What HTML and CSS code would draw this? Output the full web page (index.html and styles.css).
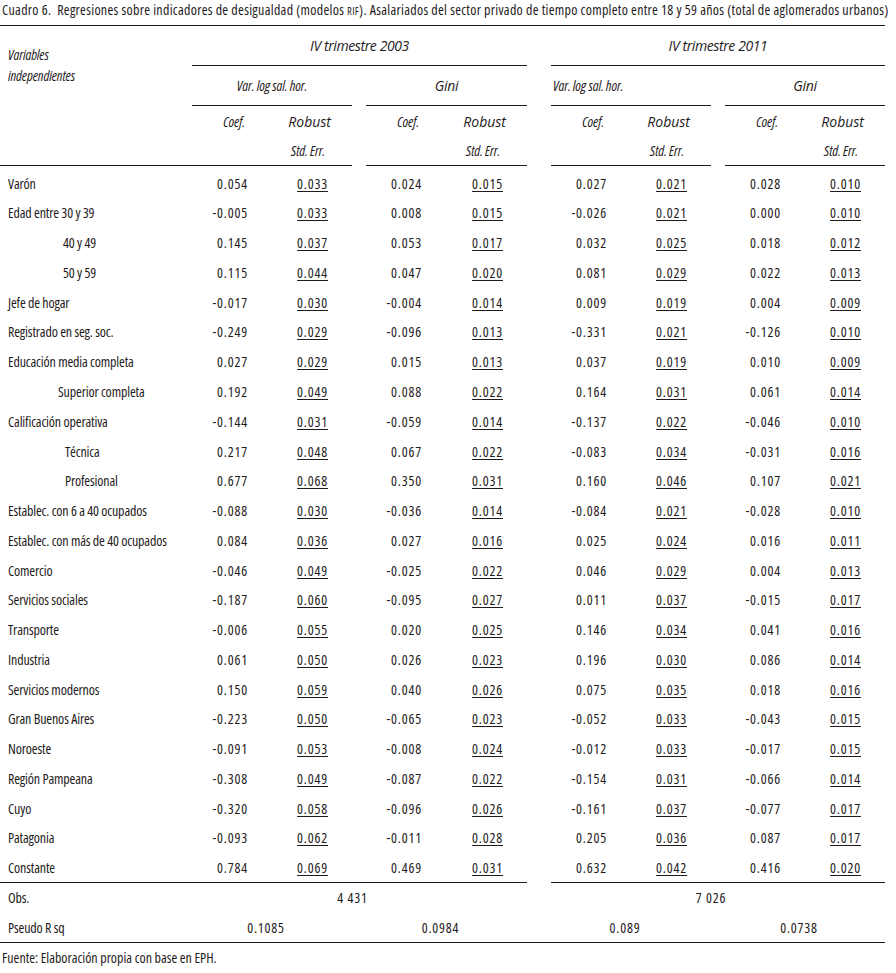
FILE: index.html
```html
<!DOCTYPE html>
<html lang="es">
<head>
<meta charset="utf-8">
<title>Cuadro 6</title>
<link rel="stylesheet" href="styles.css">
</head>
<body>
<div class="title">Cuadro 6.&nbsp; Regresiones sobre indicadores de desigualdad (modelos <span class="sc">RIF</span>). Asalariados del sector privado de tiempo completo entre 18 y 59 años (total de aglomerados urbanos)</div>
<table class="tbl">
<colgroup>
<col class="c-label"><col class="c-num"><col class="c-num"><col class="c-gap1"><col class="c-num"><col class="c-num2"><col class="c-gap2"><col class="c-num"><col class="c-num"><col class="c-gap1"><col class="c-num"><col class="c-num">
</colgroup>
<thead>
<tr class="h1">
<th class="varhead ruled" rowspan="4">Variables<br>independientes</th>
<th colspan="5" class="ruled period">IV trimestre 2003</th>
<th></th>
<th colspan="5" class="ruled period">IV trimestre 2011</th>
</tr>
<tr class="h2">
<th colspan="2" class="ruled">Var. log sal. hor.</th><th></th>
<th colspan="2" class="ruled gini">Gini</th><th></th>
<th colspan="2" class="ruled left">Var. log sal. hor.</th><th></th>
<th colspan="2" class="ruled gini">Gini</th>
</tr>
<tr class="h3">
<th class="coefh">Coef.</th><th class="robh">Robust</th><th></th>
<th class="coefh">Coef.</th><th class="robh">Robust</th><th></th>
<th class="coefh">Coef.</th><th class="robh">Robust</th><th></th>
<th class="coefh">Coef.</th><th class="robh">Robust</th>
</tr>
<tr class="h4">
<th class="ruled"></th><th class="robh2 ruled">Std. Err.</th><th></th>
<th class="ruled"></th><th class="robh2 ruled">Std. Err.</th><th></th>
<th class="ruled"></th><th class="robh2 ruled">Std. Err.</th><th></th>
<th class="ruled"></th><th class="robh2 ruled">Std. Err.</th>
</tr>
</thead>
<tbody id="rows"></tbody>
<tfoot>
<tr class="f">
<td class="lab">Obs.</td>
<td colspan="5" class="obs">4 431</td><td></td>
<td colspan="5" class="obs">7 026</td>
</tr>
<tr class="f last">
<td class="lab">Pseudo R sq</td>
<td colspan="2" class="rsq">0.1085</td><td></td>
<td colspan="2" class="rsq">0.0984</td><td></td>
<td colspan="2" class="rsq">0.089</td><td></td>
<td colspan="2" class="rsq">0.0738</td>
</tr>
</tfoot>
</table>
<div class="source">Fuente: Elaboración propia con base en EPH.</div>
<script src="app.js"></script>
</body>
</html>
```
FILE: app.js
```js
const data = [
  ["Varón", "", "0.054","0.033","0.024","0.015","0.027","0.021","0.028","0.010"],
  ["Edad entre 30 y 39", "", "-0.005","0.033","0.008","0.015","-0.026","0.021","0.000","0.010"],
  ["40 y 49", "i1", "0.145","0.037","0.053","0.017","0.032","0.025","0.018","0.012"],
  ["50 y 59", "i1", "0.115","0.044","0.047","0.020","0.081","0.029","0.022","0.013"],
  ["Jefe de hogar", "", "-0.017","0.030","-0.004","0.014","0.009","0.019","0.004","0.009"],
  ["Registrado en seg. soc.", "", "-0.249","0.029","-0.096","0.013","-0.331","0.021","-0.126","0.010"],
  ["Educación media completa", "", "0.027","0.029","0.015","0.013","0.037","0.019","0.010","0.009"],
  ["Superior completa", "i2", "0.192","0.049","0.088","0.022","0.164","0.031","0.061","0.014"],
  ["Calificación operativa", "", "-0.144","0.031","-0.059","0.014","-0.137","0.022","-0.046","0.010"],
  ["Técnica", "i3", "0.217","0.048","0.067","0.022","-0.083","0.034","-0.031","0.016"],
  ["Profesional", "i3", "0.677","0.068","0.350","0.031","0.160","0.046","0.107","0.021"],
  ["Establec. con 6 a 40 ocupados", "", "-0.088","0.030","-0.036","0.014","-0.084","0.021","-0.028","0.010"],
  ["Establec. con más de 40 ocupados", "", "0.084","0.036","0.027","0.016","0.025","0.024","0.016","0.011"],
  ["Comercio", "", "-0.046","0.049","-0.025","0.022","0.046","0.029","0.004","0.013"],
  ["Servicios sociales", "", "-0.187","0.060","-0.095","0.027","0.011","0.037","-0.015","0.017"],
  ["Transporte", "", "-0.006","0.055","0.020","0.025","0.146","0.034","0.041","0.016"],
  ["Industria", "", "0.061","0.050","0.026","0.023","0.196","0.030","0.086","0.014"],
  ["Servicios modernos", "", "0.150","0.059","0.040","0.026","0.075","0.035","0.018","0.016"],
  ["Gran Buenos Aires", "", "-0.223","0.050","-0.065","0.023","-0.052","0.033","-0.043","0.015"],
  ["Noroeste", "", "-0.091","0.053","-0.008","0.024","-0.012","0.033","-0.017","0.015"],
  ["Región Pampeana", "", "-0.308","0.049","-0.087","0.022","-0.154","0.031","-0.066","0.014"],
  ["Cuyo", "", "-0.320","0.058","-0.096","0.026","-0.161","0.037","-0.077","0.017"],
  ["Patagonia", "", "-0.093","0.062","-0.011","0.028","0.205","0.036","0.087","0.017"],
  ["Constante", "", "0.784","0.069","0.469","0.031","0.632","0.042","0.416","0.020"]
];
const tb = document.getElementById("rows");
data.forEach((r, idx) => {
  const tr = document.createElement("tr");
  if (idx === 0) tr.className = "first";
  if (idx === data.length - 1) tr.className = "lastrow";
  let h = '<td class="lab ' + r[1] + '">' + r[0] + '</td>';
  for (let g = 0; g < 4; g++) {
    h += '<td class="coef">' + r[2 + g * 2] + '</td>';
    h += '<td class="rob"><u>' + r[3 + g * 2] + '</u></td>';
    if (g < 3) h += '<td class="gap' + (g === 1 ? ' g2' : '') + '"></td>';
  }
  tr.innerHTML = h;
  tb.appendChild(tr);
});
```
FILE: styles.css
```css
html, body {
  margin: 0;
  padding: 0;
  background: #ffffff;
}
body {
  font-family: "Open Sans", "DejaVu Sans Condensed", sans-serif;
  font-stretch: 75%;
  font-size: 14px;
  color: #1f1b1c;
}
.title {
  width: 885px;
  height: 26px;
  line-height: 20px;
  padding-left: 2px;
  box-sizing: border-box;
  border-bottom: 1px solid #1f1b1c;
  white-space: nowrap;
  letter-spacing: 0.3px;
}
.sc { font-size: 10.5px; }
.tbl {
  border-collapse: collapse;
  table-layout: fixed;
  width: 885px;
}
.c-label { width: 192px; }
.c-num { width: 80px; }
.c-num2 { width: 81px; }
.c-gap1 { width: 14px; }
.c-gap2 { width: 24px; }
th, td {
  padding: 0;
  white-space: nowrap;
}
td { letter-spacing: -0.15px; }
th {
  font-weight: normal;
  font-style: italic;
  text-align: center;
  letter-spacing: -0.1px;
}
.ruled { border-bottom: 1px solid #1f1b1c; }
.h1 { height: 39px; }
.h2 { height: 40px; }
.h3 { height: 32px; }
.h4 { height: 28px; }
.period { font-stretch: 100%; letter-spacing: -0.4px; }
.gini { font-stretch: 100%; letter-spacing: -0.3px; }
.varhead {
  text-align: left;
  vertical-align: top;
  padding: 18px 0 0 8px;
  line-height: 21px;
}
.left { text-align: left; padding-left: 2px; }
.coefh { text-align: right; padding-right: 27px; }
.robh { text-align: right; padding-right: 21px; font-stretch: 100%; letter-spacing: 0; }
.robh2 { text-align: right; padding-right: 27px; }
tbody tr { height: 29.78px; }
tbody tr.first { height: 33px; }
tbody tr.first td { padding-top: 3px; }
tbody tr.lastrow td { border-bottom: 1px solid #1f1b1c; }
tbody tr.lastrow td.g2 { border-bottom: none; }
.lab { padding-left: 8px; text-align: left; }
.i1 { padding-left: 63px; }
.i2 { padding-left: 58px; }
.i3 { padding-left: 65px; }
.coef, .rob, .obs, .rsq { letter-spacing: 0.8px; }
.coef { text-align: right; padding-right: 24px; }
.rob { text-align: right; padding-right: 24px; }
.rob u { text-underline-offset: 2px; }
tfoot tr { height: 30px; }
.obs { text-align: center; padding-right: 14px; }
.rsq { text-align: center; padding-right: 12px; }
tfoot tr.last td { border-bottom: 1px solid #1f1b1c; }
.source {
  padding: 6px 0 0 2px;
  line-height: 18px;
}
```
